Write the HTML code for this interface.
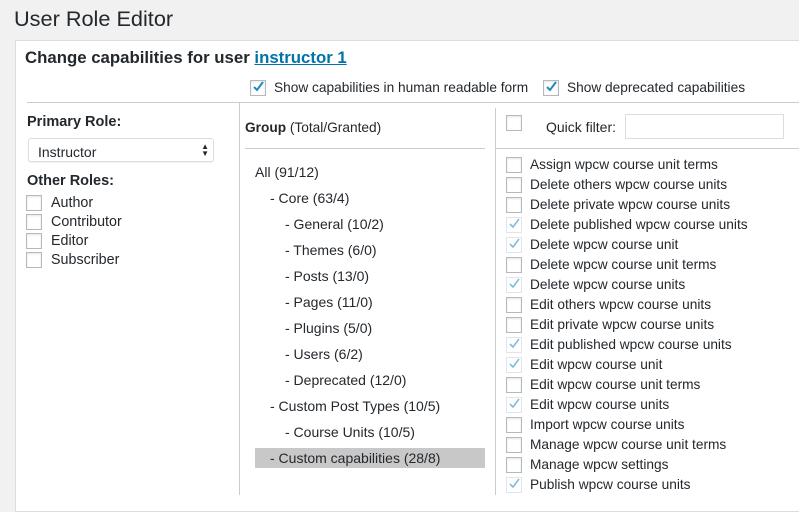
<!DOCTYPE html>
<html><head><style>
body{margin:0;width:799px;height:495px;background:#f1f1f1;font-family:"Liberation Sans",Arial,sans-serif;color:#23282d;position:relative;overflow:hidden;font-size:13.7px}
.a{position:absolute;white-space:nowrap}
.cb{position:absolute;width:14px;height:14px;border:1px solid #b4b9be;background:#fff;box-shadow:inset 0 1px 2px rgba(0,0,0,.1)}
.cb.d{border-color:#e2e4e7;box-shadow:none}
.ck{position:absolute;left:2px;top:0px;width:11px;height:12px}
.line{position:absolute;background:#ccc}
.g{font-size:14px}
</style></head><body>
<div class="a" style="left:14px;top:6px;font-size:21.7px;color:#23282d">User Role Editor</div>
<div class="a" style="left:15px;top:40px;width:800px;height:470px;background:#fff;border:1px solid #ddd"></div>
<div class="a" style="left:25px;top:48px;font-size:16.8px;font-weight:bold">Change capabilities for user <span style="color:#0073aa;text-decoration:underline">instructor 1</span></div>
<div class="cb" style="left:250px;top:80px"><svg class="ck" viewBox="0 0 11 12"><path d="M1 6l3 3 6-8" stroke="#1e8cbe" stroke-width="2" fill="none"/></svg></div>
<div class="a" style="left:274px;top:80px">Show capabilities in human readable form</div>
<div class="cb" style="left:543px;top:80px"><svg class="ck" viewBox="0 0 11 12"><path d="M1 6l3 3 6-8" stroke="#1e8cbe" stroke-width="2" fill="none"/></svg></div>
<div class="a" style="left:567px;top:80px">Show deprecated capabilities</div>
<div class="line" style="left:27px;top:102px;width:772px;height:1px"></div>
<div class="line" style="left:239px;top:102px;width:1px;height:393px"></div>
<div class="line" style="left:495px;top:108px;width:1px;height:387px"></div>
<div class="line" style="left:245px;top:148px;width:240px;height:1px"></div>
<div class="line" style="left:495px;top:148px;width:304px;height:1px"></div>

<div class="a" style="left:27px;top:114px;font-weight:bold;font-size:14.5px">Primary Role:</div>
<div class="a" style="left:28px;top:138px;width:186px;height:24px;border:1px solid #ddd;border-radius:3px;box-sizing:border-box;padding:5px 0 0 9px;box-shadow:0 1px 1px rgba(0,0,0,.05);font-size:14px">Instructor<span style="position:absolute;right:4px;top:4px;font-size:8px;line-height:7px">▲<br>▼</span></div>
<div class="a" style="left:27px;top:173px;font-weight:bold;font-size:14.5px">Other Roles:</div>
<div class="cb" style="left:26px;top:195px"></div><div class="a" style="left:51px;top:195px;font-size:14.3px">Author</div>
<div class="cb" style="left:26px;top:214px"></div><div class="a" style="left:51px;top:214px;font-size:14.3px">Contributor</div>
<div class="cb" style="left:26px;top:233px"></div><div class="a" style="left:51px;top:233px;font-size:14.3px">Editor</div>
<div class="cb" style="left:26px;top:252px"></div><div class="a" style="left:51px;top:252px;font-size:14.3px">Subscriber</div>

<div class="a" style="left:245px;top:120px"><b>Group</b> (Total/Granted)</div>
<div class="a" style="left:255px;top:448px;width:230px;height:20px;background:#c8c8c8"></div>
<div class="a g" style="left:255px;top:164px">All (91/12)</div>
<div class="a g" style="left:270px;top:190px">- Core (63/4)</div>
<div class="a g" style="left:285px;top:216px">- General (10/2)</div>
<div class="a g" style="left:285px;top:242px">- Themes (6/0)</div>
<div class="a g" style="left:285px;top:268px">- Posts (13/0)</div>
<div class="a g" style="left:285px;top:294px">- Pages (11/0)</div>
<div class="a g" style="left:285px;top:320px">- Plugins (5/0)</div>
<div class="a g" style="left:285px;top:346px">- Users (6/2)</div>
<div class="a g" style="left:285px;top:372px">- Deprecated (12/0)</div>
<div class="a g" style="left:270px;top:398px">- Custom Post Types (10/5)</div>
<div class="a g" style="left:285px;top:424px">- Course Units (10/5)</div>
<div class="a g" style="left:270px;top:450px">- Custom capabilities (28/8)</div>

<div class="cb" style="left:506px;top:115px"></div>
<div class="a" style="left:546px;top:119px;font-size:14px">Quick filter:</div>
<div class="a" style="left:625px;top:114px;width:159px;height:25px;border:1px solid #ddd;box-sizing:border-box"></div>

<div id="caps"></div>
<script>
var c=[["Assign wpcw course unit terms",0],["Delete others wpcw course units",0],["Delete private wpcw course units",0],["Delete published wpcw course units",1],["Delete wpcw course unit",1],["Delete wpcw course unit terms",0],["Delete wpcw course units",1],["Edit others wpcw course units",0],["Edit private wpcw course units",0],["Edit published wpcw course units",1],["Edit wpcw course unit",1],["Edit wpcw course unit terms",0],["Edit wpcw course units",1],["Import wpcw course units",0],["Manage wpcw course unit terms",0],["Manage wpcw settings",0],["Publish wpcw course units",1]];
var h="";c.forEach(function(x,i){var y=157+i*20;
h+='<div class="cb'+(x[1]?' d':'')+'" style="left:506px;top:'+y+'px">'+(x[1]?'<svg class="ck" viewBox="0 0 11 12"><path d="M1 6l3 3 6-8" stroke="#7fbde0" stroke-width="1.6" fill="none"/></svg>':'')+'</div><div class="a" style="left:530px;top:'+(y)+'px">'+x[0]+'</div>';});
document.getElementById("caps").innerHTML=h;
</script>
</body></html>
